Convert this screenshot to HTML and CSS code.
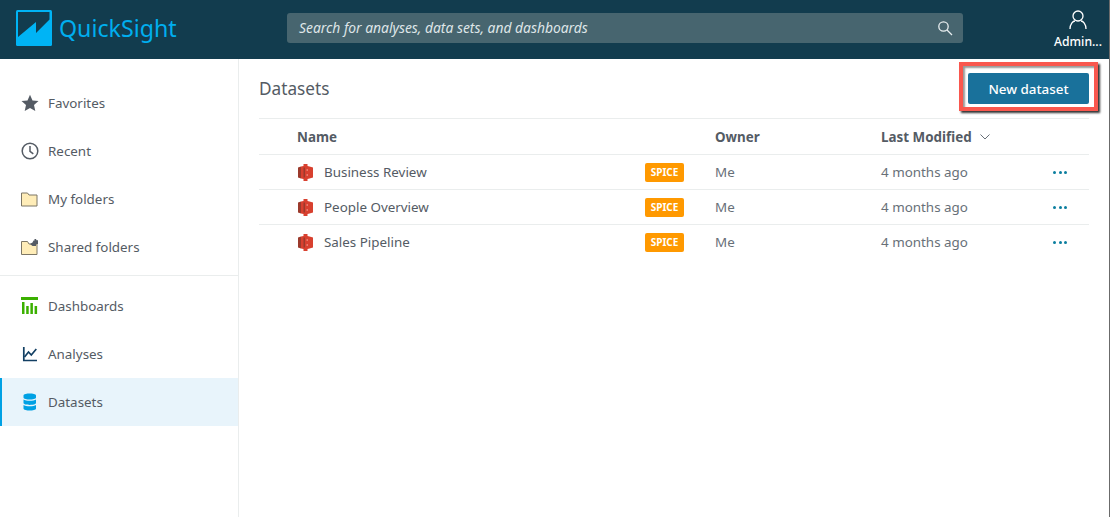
FILE: index.html
```html
<!DOCTYPE html>
<html lang="en">
<head>
<meta charset="utf-8">
<title>Datasets</title>
<link rel="stylesheet" href="styles.css">
</head>
<body>
<header class="topbar">
  <div class="brand">
    <svg class="logo" width="36" height="36" viewBox="0 0 36 36"><rect width="36" height="36" rx="1.500" fill="#00b4f5"/><path fill="#123c4e" d="M2 2h31.500v7.500L20 23V12L2 27z"/></svg>
    <span class="brand-name">QuickSight</span>
  </div>
  <div class="search">
    <span class="search-text">Search for analyses, data sets, and dashboards</span>
    <svg width="16" height="16" viewBox="0 0 16 16" fill="none" stroke="#e8eef0" stroke-width="1.300"><circle cx="6.500" cy="6.500" r="4.700"/><path d="M10 10l5 5"/></svg>
  </div>
  <div class="user">
    <svg width="18" height="20" viewBox="0 0 18 20" fill="none" stroke="#fff" stroke-width="1.300"><circle cx="9" cy="6" r="5"/><path d="M1 19c0-5 3-8 5-8M17 19c0-5-3-8-5-8"/></svg>
    <span class="user-name">Admin...</span>
  </div>
</header>
<div class="body">
  <nav class="sidebar">
    <ul class="nav-group">
      <li class="nav-item"><svg class="nav-icon" viewBox="0 0 18 18"><path fill="#545b64" d="M9 .8l2.500 5.600 6 .6-4.500 4 1.300 6L9 14l-5.300 3 1.300-6-4.500-4 6-.6z"/></svg>Favorites</li>
      <li class="nav-item"><svg class="nav-icon" viewBox="0 0 18 18" fill="none" stroke="#545b64" stroke-width="1.500"><circle cx="9" cy="9" r="7.800"/><path d="M9 4v5.300l3.300 2.500"/></svg>Recent</li>
      <li class="nav-item"><svg class="nav-icon" viewBox="0 0 18 18"><path fill="#ffedb8" stroke="#7d7766" d="M.5 3h6l1.500 2h8v11H.5z"/></svg>My folders</li>
      <li class="nav-item"><svg class="nav-icon" viewBox="0 0 18 18"><path fill="#ffedb8" stroke="#7d7766" d="M.5 3.500h6L8 6h8v10.500H.5z"/><path fill="#545b64" d="M9 6l2.500-1.500 1-2h1V1h1.500l.5 1.200h1.500V6H15v2h-3.500z"/></svg>Shared folders</li>
    </ul>
    <ul class="nav-group nav-second">
      <li class="nav-item"><svg class="nav-icon" viewBox="0 0 18 18"><path fill="#3bb000" d="M0 0h17v3H0zM1 5h2.500v12H1zM5.200 9h2.500v8H5.200zM9.400 6h2.500v11H9.400zM13.600 9h2.500v8h-2.500z"/></svg>Dashboards</li>
      <li class="nav-item"><svg class="nav-icon" viewBox="0 0 18 18" fill="none" stroke="#123f63" stroke-width="1.700"><path d="M2.800 2v13.500H16"/><path d="M3.500 12l4-5 2.800 3 5-6"/></svg>Analyses</li>
      <li class="nav-item is-active"><svg class="nav-icon" viewBox="0 0 18 18"><path fill="#00a1e4" d="M2.500 2.500C2.500 1 6 .5 8.800.5s6.200.5 6.200 2v2c0 1.500-3.400 2-6.200 2s-6.300-.5-6.300-2zM2.500 6.500c1 1 3.800 1.300 6.300 1.300S14 7.500 15 6.500V10c0 1.300-3.400 1.900-6.200 1.900S2.500 11.300 2.500 10zM2.500 12c1 1 3.800 1.300 6.300 1.300S14 13 15 12v3.500c0 1.500-3.400 2-6.200 2s-6.300-.5-6.300-2z"/></svg>Datasets</li>
    </ul>
  </nav>
  <main class="content">
    <div class="content-head">
      <h1 class="title">Datasets</h1>
      <div class="callout"><button class="primary" type="button">New dataset</button></div>
    </div>
    <div class="row row-head">
      <span class="col-name">Name</span>
      <span class="col-owner">Owner</span>
      <span class="col-mod">Last Modified <svg class="chev" width="10" height="6" viewBox="0 0 10 6" fill="none" stroke="#687078"><path d="M.5.500l4.500 4.500 4.500-4.500"/></svg></span>
    </div>
    <div class="row">
      <span class="col-name name-cell"><svg class="ds" width="15" height="17" viewBox="0 0 15 17"><path fill="#9b3a2c" d="M0 3.500l3-1v12l-3-1z"/><path fill="#d8402f" d="M3 2.500l2.500-.5V0h4v2l2 .5 3.500 1v10l-3.500 1-2 .5v2h-4v-2l-2.500-.5z"/><path fill="#9b3a2c" d="M5.500 3.500h1.500v10H5.500z"/><path fill="#e87a6c" d="M8.500 5h1.500v2H8.500zM8.500 10h1.500v2H8.500z"/></svg>Business Review</span>
      <span class="badge">SPICE</span>
      <span class="col-owner">Me</span>
      <span class="col-mod">4 months ago</span>
      <span class="dots"><i></i><i></i><i></i></span>
    </div>
    <div class="row">
      <span class="col-name name-cell"><svg class="ds" width="15" height="17" viewBox="0 0 15 17"><path fill="#9b3a2c" d="M0 3.500l3-1v12l-3-1z"/><path fill="#d8402f" d="M3 2.500l2.500-.5V0h4v2l2 .5 3.500 1v10l-3.500 1-2 .5v2h-4v-2l-2.500-.5z"/><path fill="#9b3a2c" d="M5.500 3.500h1.500v10H5.500z"/><path fill="#e87a6c" d="M8.500 5h1.500v2H8.500zM8.500 10h1.500v2H8.500z"/></svg>People Overview</span>
      <span class="badge">SPICE</span>
      <span class="col-owner">Me</span>
      <span class="col-mod">4 months ago</span>
      <span class="dots"><i></i><i></i><i></i></span>
    </div>
    <div class="row">
      <span class="col-name name-cell"><svg class="ds" width="15" height="17" viewBox="0 0 15 17"><path fill="#9b3a2c" d="M0 3.500l3-1v12l-3-1z"/><path fill="#d8402f" d="M3 2.500l2.500-.5V0h4v2l2 .5 3.500 1v10l-3.500 1-2 .5v2h-4v-2l-2.500-.5z"/><path fill="#9b3a2c" d="M5.500 3.500h1.500v10H5.500z"/><path fill="#e87a6c" d="M8.500 5h1.500v2H8.500zM8.500 10h1.500v2H8.500z"/></svg>Sales Pipeline</span>
      <span class="badge">SPICE</span>
      <span class="col-owner">Me</span>
      <span class="col-mod">4 months ago</span>
      <span class="dots"><i></i><i></i><i></i></span>
    </div>
  </main>
</div>
</body>
</html>
```

FILE: styles.css
```css
* { box-sizing: border-box; }
html, body { height: 100%; }
body {
  margin: 0;
  display: flex;
  flex-direction: column;
  overflow: hidden;
  background: #fff;
  color: #545b64;
  font-family: "Noto Sans", sans-serif;
  font-size: 13.4px;
  border-right: 1px solid #6b6b6b;
}
.topbar {
  height: 59px;
  flex: none;
  margin-right: -1px;
  display: flex;
  align-items: center;
  background: #123c4e;
  padding: 0 0 3px 16px;
}
.brand { width: 271px; display: flex; align-items: center; gap: 7px; }
.logo { display: block; }
.brand-name { color: #00aeef; font-size: 23.2px; line-height: 30px; }
.search {
  width: 676px;
  height: 30px;
  border-radius: 3px;
  background: #47656f;
  display: flex;
  align-items: center;
  justify-content: space-between;
  padding: 0 10px 0 12px;
}
.search-text { color: #dfe5e8; font-style: italic; font-size: 13.85px; line-height: 18px; margin-top: -1px; }
.user {
  width: 60px;
  margin-left: 85px;
  display: flex;
  flex-direction: column;
  align-items: center;
  gap: 5px;
  color: #fff;
  font-size: 12.2px;
  font-weight: 500;
  line-height: 14px;
  margin-top: 2px;
}
.body { flex: 1; display: flex; min-height: 0; }
.sidebar { width: 239px; flex: none; border-right: 1px solid #eaeded; padding-top: 20px; }
.nav-group { list-style: none; margin: 0; padding: 0; }
.nav-second { border-top: 1px solid #eaeded; margin-top: 4px; padding-top: 6px; }
.nav-item {
  height: 48px;
  display: flex;
  align-items: center;
  gap: 9px;
  padding-left: 21px;
}
.nav-icon { width: 18px; height: 18px; flex: none; }
.is-active { background: #e8f4fb; border-left: 2px solid #00a1e4; padding-left: 19px; }
.content { flex: 1; min-width: 0; padding: 0 20px; }
.content-head {
  height: 59px;
  display: flex;
  align-items: center;
  justify-content: space-between;
}
.title { margin: 0; font-size: 17.2px; font-weight: 400; color: #545b64; }
.callout {
  align-self: flex-start;
  margin: 3px -9px 0 0;
  padding: 7px 5px 3px;
  border: 4px solid #f9574e;
  box-shadow: 2px 2px 2px #333, inset 2px 2px 2px #999;
}
.primary {
  display: block;
  width: 121px;
  height: 31px;
  border: 0;
  border-radius: 2px;
  background: #19719b;
  color: #fff;
  font: 500 13.4px "Noto Sans", sans-serif;
}
.row {
  height: 35px;
  display: flex;
  align-items: center;
  border-top: 1px solid #eaeded;
  padding-left: 38px;
}
.row-head { height: 36px; font-weight: 700; }
.col-name { width: 348px; flex: none; }
.name-cell { display: flex; align-items: center; gap: 11px; padding-left: 1px; }
.ds { flex: none; }
.badge {
  width: 39px;
  height: 19px;
  flex: none;
  margin-right: 31px;
  border-radius: 2px;
  background: #ff9900;
  color: #fff;
  font-size: 10px;
  font-weight: 700;
  line-height: 19px;
  text-align: center;
}
.col-owner { width: 166px; flex: none; }
.row-head .col-owner { margin-left: 70px; }
.col-mod { flex: none; display: flex; align-items: center; gap: 8px; }
.row .col-owner, .row .col-mod { color: #687078; }
.row-head .col-owner, .row-head .col-mod { color: #545b64; }
.dots { margin-left: auto; margin-right: 22px; display: flex; gap: 2.500px; }
.dots i { width: 3px; height: 3px; border-radius: 50%; background: #0a7e9f; }
```
